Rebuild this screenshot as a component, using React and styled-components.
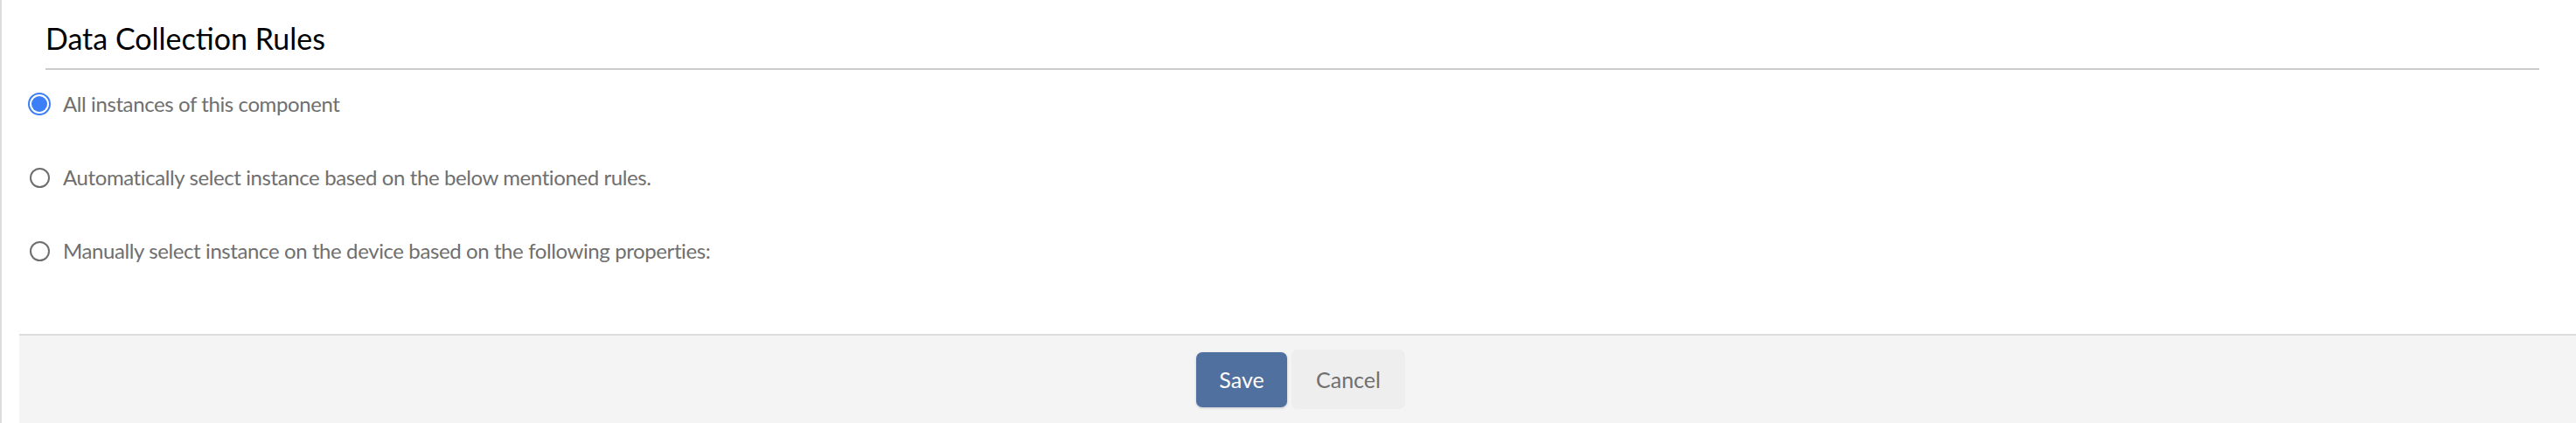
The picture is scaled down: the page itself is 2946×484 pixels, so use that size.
import styled, { createGlobalStyle } from "styled-components";
import { useState } from "react";

const GlobalStyle = createGlobalStyle`
  html, body {
    margin: 0;
    padding: 0;
    background: #ffffff;
  }
  body {
    font-family: Lato, "Noto Sans", sans-serif;
  }
`;

const options = [
  { id: "all", label: "All instances of this component" },
  { id: "auto", label: "Automatically select instance based on the below mentioned rules." },
  { id: "manual", label: "Manually select instance on the device based on the following properties:" },
];

export default function App() {
  const [selected, setSelected] = useState("all");

  return (
    <>
      <GlobalStyle />
      <Page>
        <Panel>
          <Header>
            <Title>Data Collection Rules</Title>
          </Header>
          <OptionList>
            {options.map((opt) => (
              <OptionRow key={opt.id} onClick={() => setSelected(opt.id)}>
                <RadioSlot>
                  <Radio $checked={selected === opt.id} />
                </RadioSlot>
                <OptionLabel>{opt.label}</OptionLabel>
              </OptionRow>
            ))}
          </OptionList>
        </Panel>
        <Footer>
          <Button $variant="primary">Save</Button>
          <Button>Cancel</Button>
        </Footer>
      </Page>
    </>
  );
}

const Page = styled.main`
  min-height: 484px;
  border-left: 2px solid #dcdcdc;
  padding-left: 20px;
  display: flex;
  flex-direction: column;
  box-sizing: border-box;
`;

const Panel = styled.section`
  flex: 1;
`;

const Header = styled.header`
  margin: 0 42px 0 30px;
  padding-top: 27px;
  padding-bottom: 17px;
  border-bottom: 2px solid #cccccc;
`;

const Title = styled.h2`
  margin: 0;
  font-size: 34px;
  line-height: 34px;
  font-weight: 400;
  color: #000000;
`;

const OptionList = styled.div`
  display: flex;
  flex-direction: column;
  gap: 44px;
  padding: 19px 0 75px 10px;
`;

const OptionRow = styled.label`
  display: flex;
  align-items: center;
  gap: 14px;
  height: 40px;
  cursor: pointer;
`;

const RadioSlot = styled.span`
  width: 26px;
  height: 26px;
  display: flex;
  align-items: center;
  justify-content: center;
`;

const Radio = styled.span`
  box-sizing: border-box;
  width: ${(p) => (p.$checked ? "26px" : "23px")};
  height: ${(p) => (p.$checked ? "26px" : "23px")};
  border-radius: 50%;
  border: 2px solid ${(p) => (p.$checked ? "#3b7ef6" : "#6e6e6e")};
  background: #ffffff;
  display: flex;
  align-items: center;
  justify-content: center;

  &::after {
    content: "";
    display: ${(p) => (p.$checked ? "block" : "none")};
    width: 18px;
    height: 18px;
    border-radius: 50%;
    background: #3b7ef6;
  }
`;

const OptionLabel = styled.span`
  font-size: 24px;
  letter-spacing: -0.4px;
  color: #6f6f6f;
  line-height: 1;
`;

const Footer = styled.footer`
  height: 100px;
  background: #f4f4f4;
  border-top: 2px solid #dcdcdc;
  display: flex;
  align-items: center;
  justify-content: center;
  gap: 5px;
  padding-left: 7px;
`;

const Button = styled.button`
  font-family: inherit;
  font-size: 25px;
  border: none;
  border-radius: 7px;
  cursor: pointer;
  padding: 0;
  width: ${(p) => (p.$variant === "primary" ? "104px" : "130px")};
  height: ${(p) => (p.$variant === "primary" ? "63px" : "68px")};
  background: ${(p) => (p.$variant === "primary" ? "#50709f" : "#eeeeee")};
  color: ${(p) => (p.$variant === "primary" ? "#ffffff" : "#707070")};
  box-shadow: ${(p) => (p.$variant === "primary" ? "0 1px 3px rgba(0,0,0,0.18)" : "none")};
`;
